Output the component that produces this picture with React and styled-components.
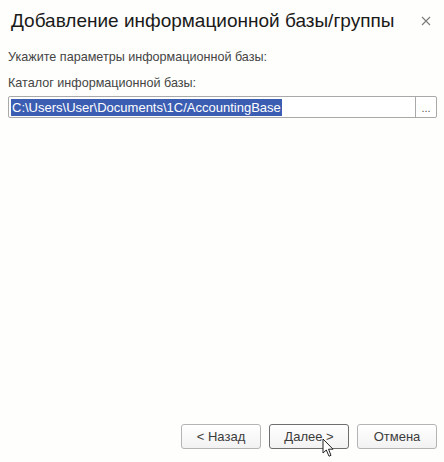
import React from "react";
import styled, { createGlobalStyle } from "styled-components";

const Global = createGlobalStyle`
  html, body {
    margin: 0;
    padding: 0;
    background: #fefefc;
  }
  body {
    font-family: Arial, "Liberation Sans", sans-serif;
  }
`;

const Window = styled.div`
  position: relative;
  width: 444px;
  height: 462px;
  box-sizing: border-box;
  display: flex;
  flex-direction: column;
  padding: 0 7px 13px 8px;
  background: #fefefc;
`;

const Header = styled.div`
  display: flex;
  align-items: center;
  justify-content: space-between;
  height: 41px;
  padding-left: 3px;
`;

const Title = styled.h1`
  margin: 0;
  font-size: 19px;
  font-weight: normal;
  color: #1a1a1a;
`;

const Close = styled.button`
  border: none;
  background: none;
  padding: 0;
  width: 16px;
  height: 16px;
  margin-right: 3px;
  display: flex;
  align-items: center;
  justify-content: center;
`;

const Body = styled.div`
  flex: 1;
  display: flex;
  flex-direction: column;
  padding-top: 9px;
`;

const Label = styled.div`
  font-size: 12.6px;
  color: #444;
  line-height: 15px;
  margin-bottom: ${(p) => p.$gap || 0}px;
`;

const Field = styled.div`
  display: flex;
  height: 22px;
  border: 1px solid #a9a9a9;
  border-radius: 2px;
  background: #fff;
  box-sizing: border-box;
`;

const Value = styled.div`
  flex: 1;
  display: flex;
  align-items: center;
  padding-left: 2px;
`;

const Selected = styled.span`
  background: #3b5db2;
  color: #fff;
  font-size: 13px;
  line-height: 17px;
  padding: 0 1px;
`;

const Pick = styled.div`
  width: 20px;
  border-left: 1px solid #a9a9a9;
  display: flex;
  align-items: center;
  justify-content: center;
  font-size: 11px;
  color: #555;
  padding-top: 2px;
`;

const Footer = styled.div`
  display: flex;
  justify-content: flex-end;
  gap: 8px;
`;

const Button = styled.button`
  width: 80px;
  height: 25px;
  box-sizing: border-box;
  border: 1px solid ${(p) => (p.$focused ? "#6e6e6e" : "#b4b4b4")};
  border-radius: 3px;
  background: linear-gradient(#ffffff, #f2f2f2);
  font-family: Arial, "Liberation Sans", sans-serif;
  font-size: 13px;
  color: #3c3c3c;
  padding: 0;
`;

const Cursor = styled.svg`
  position: absolute;
  left: 322px;
  top: 438px;
`;

export default function App() {
  return (
    <>
      <Global />
      <Window>
        <Header>
          <Title>Добавление информационной базы/группы</Title>
          <Close>
            <svg width="10" height="10" viewBox="0 0 10 10">
              <path d="M1 1L9 9M9 1L1 9" stroke="#7a7a7a" strokeWidth="1.1" />
            </svg>
          </Close>
        </Header>
        <Body>
          <Label $gap={11}>Укажите параметры информационной базы:</Label>
          <Label $gap={5}>Каталог информационной базы:</Label>
          <Field>
            <Value>
              <Selected>C:\Users\User\Documents\1C/AccountingBase</Selected>
            </Value>
            <Pick>...</Pick>
          </Field>
        </Body>
        <Footer>
          <Button>&lt; Назад</Button>
          <Button $focused>Далее &gt;</Button>
          <Button>Отмена</Button>
        </Footer>
        <Cursor width="13" height="20" viewBox="0 0 13 20">
          <path
            d="M1 1 L1 15 L4.3 12 L7 18.2 L9 17.3 L6.5 11.2 L11 11.2 Z"
            fill="#fff"
            stroke="#222"
            strokeWidth="1"
            strokeLinejoin="round"
          />
        </Cursor>
      </Window>
    </>
  );
}
